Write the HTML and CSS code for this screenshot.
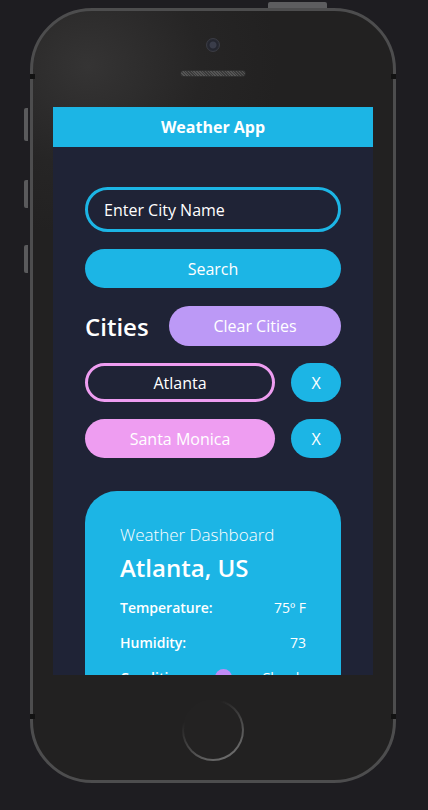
FILE: index.html
```html
<!DOCTYPE html>
<html lang="en">
<head>
<meta charset="utf-8">
<title>Weather App</title>
<link rel="stylesheet" href="styles.css">
</head>
<body>
<div class="phone">
  <span class="side-btn btn-mute"></span>
  <span class="side-btn btn-vol-up"></span>
  <span class="side-btn btn-vol-down"></span>
  <span class="top-btn"></span>
  <span class="antenna a-tl"></span>
  <span class="antenna a-tr"></span>
  <span class="antenna a-bl"></span>
  <span class="antenna a-br"></span>
  <div class="phone-top">
    <div class="camera"></div>
    <div class="speaker"></div>
  </div>
  <div class="screen">
    <header class="app-header">Weather App</header>
    <main class="app-body">
      <div class="city-input">Enter City Name</div>
      <button class="btn btn-search">Search</button>
      <div class="cities-row">
        <h2 class="cities-title">Cities</h2>
        <button class="btn btn-clear">Clear Cities</button>
      </div>
      <div class="city-row">
        <button class="btn city city-outline">Atlanta</button>
        <button class="btn btn-x">X</button>
      </div>
      <div class="city-row">
        <button class="btn city city-filled">Santa Monica</button>
        <button class="btn btn-x">X</button>
      </div>
      <section class="card">
        <p class="card-sub">Weather Dashboard</p>
        <h1 class="card-city">Atlanta, US</h1>
        <div class="stat"><span>Temperature:</span><span class="val">75º F</span></div>
        <div class="stat"><span>Humidity:</span><span class="val">73</span></div>
        <div class="stat"><span>Conditions:</span><span class="icon-dot"></span><span class="val">Clouds</span></div>
      </section>
    </main>
  </div>
  <div class="phone-bottom">
    <div class="home"></div>
  </div>
</div>
</body>
</html>
```
FILE: styles.css
```css
* { box-sizing: border-box; }
html, body { margin: 0; padding: 0; }
body {
  background: #1e1d21;
  width: 428px;
  height: 810px;
  overflow: hidden;
  font-family: "Open Sans", "Inter", sans-serif;
  padding-top: 8px;
  padding-left: 30px;
}
.phone {
  position: relative;
  width: 366px;
  height: 775px;
  border: 3px solid #4d4d4e;
  border-radius: 62px;
  background: radial-gradient(ellipse 190px 170px at 55px 55px, #353434 0%, #262525 60%, #222121 100%);
  padding: 0 20px;
  display: flex;
  flex-direction: column;
  align-items: center;
}
.side-btn {
  position: absolute;
  left: -9px;
  width: 4px;
  background: #5a5a5c;
  border-radius: 2px 0 0 2px;
}
.btn-mute { top: 97px; height: 33px; }
.btn-vol-up { top: 169px; height: 28px; }
.btn-vol-down { top: 234px; height: 28px; }
.top-btn {
  position: absolute;
  top: -9px;
  left: 235px;
  width: 59px;
  height: 6px;
  background: #5d5d5f;
  border-radius: 2px 2px 0 0;
}
.antenna {
  position: absolute;
  width: 5px;
  height: 5px;
  background: #121212;
}
.a-tl { left: -3px; top: 63px; }
.a-tr { right: -3px; top: 63px; }
.a-bl { left: -3px; top: 703px; }
.a-br { right: -3px; top: 703px; }
.phone-top {
  height: 96px;
  width: 100%;
  display: flex;
  flex-direction: column;
  align-items: center;
  padding-top: 27px;
}
.camera {
  width: 14px;
  height: 14px;
  border-radius: 50%;
  background: radial-gradient(circle at 50% 50%, #3a3d4a 0 3px, #23252e 4px, #2c2e37 7px);
  border: 1px solid #3b3c44;
}
.speaker {
  margin-top: 18px;
  width: 66px;
  height: 7px;
  border-radius: 4px;
  background: repeating-linear-gradient(45deg, #555 0 1px, #3a3a3a 1px 2px);
  border: 1px solid #2f2f2f;
}
.screen {
  width: 320px;
  height: 568px;
  flex: none;
  background: #1f2336;
  overflow: hidden;
  display: flex;
  flex-direction: column;
}
.app-header {
  height: 40px;
  flex: none;
  background: #1cb5e5;
  color: #fff;
  font-weight: 700;
  font-size: 16px;
  display: flex;
  align-items: center;
  justify-content: center;
}
.app-body {
  padding: 40px 32px 0;
  display: flex;
  flex-direction: column;
}
.city-input {
  height: 45px;
  border: 3px solid #1cb5e5;
  border-radius: 24px;
  color: #fff;
  font-size: 16px;
  font-weight: 500;
  display: flex;
  align-items: center;
  padding-left: 16px;
}
.btn {
  border: none;
  font-family: inherit;
  color: #fff;
  font-size: 16px;
  font-weight: 500;
  border-radius: 22px;
  display: flex;
  align-items: center;
  justify-content: center;
  padding: 0;
}
.btn-search {
  margin-top: 17px;
  height: 39px;
  background: #1cb5e5;
}
.cities-row {
  margin-top: 18px;
  height: 40px;
  display: flex;
  align-items: center;
  justify-content: space-between;
}
.cities-title {
  margin: 0;
  color: #fff;
  font-size: 24px;
  font-weight: 600;
}
.btn-clear {
  width: 172px;
  height: 40px;
  background: #bc99f6;
}
.city-row {
  margin-top: 17px;
  height: 39px;
  display: flex;
  justify-content: space-between;
}
.city {
  width: 190px;
  height: 39px;
}
.city-outline {
  background: transparent;
  border: 3px solid #ee9df1;
}
.city-filled {
  background: #ee9df1;
}
.btn-x {
  width: 50px;
  height: 39px;
  background: #1cb5e5;
}
.card {
  margin-top: 33px;
  background: #1cb5e5;
  border-radius: 32px;
  padding: 33px 35px 30px;
  color: #fff;
  height: 260px;
}
.card-sub {
  margin: 0;
  font-size: 17px;
  font-weight: 300;
  line-height: 22px;
}
.card-city {
  margin: 6px 0 0;
  font-size: 24px;
  font-weight: 600;
  line-height: 32px;
}
.stat {
  display: flex;
  align-items: center;
  font-size: 14px;
  font-weight: 600;
  height: 20px;
  margin-top: 15px;
}
.card-city + .stat { margin-top: 13px; }
.stat .val {
  margin-left: auto;
  font-weight: 400;
}
.icon-dot {
  margin-left: 19px;
  width: 17px;
  height: 17px;
  border-radius: 50%;
  background: #c08bf6;
}
.phone-bottom {
  flex: 1;
  width: 100%;
  display: flex;
  align-items: center;
  justify-content: center;
  padding-top: 4px;
}
.home {
  width: 62px;
  height: 62px;
  border-radius: 50%;
  border: 2px solid transparent;
  background:
    linear-gradient(#232222, #232222) padding-box,
    linear-gradient(150deg, #232222 25%, #6a6a6a 85%) border-box;
}
```
